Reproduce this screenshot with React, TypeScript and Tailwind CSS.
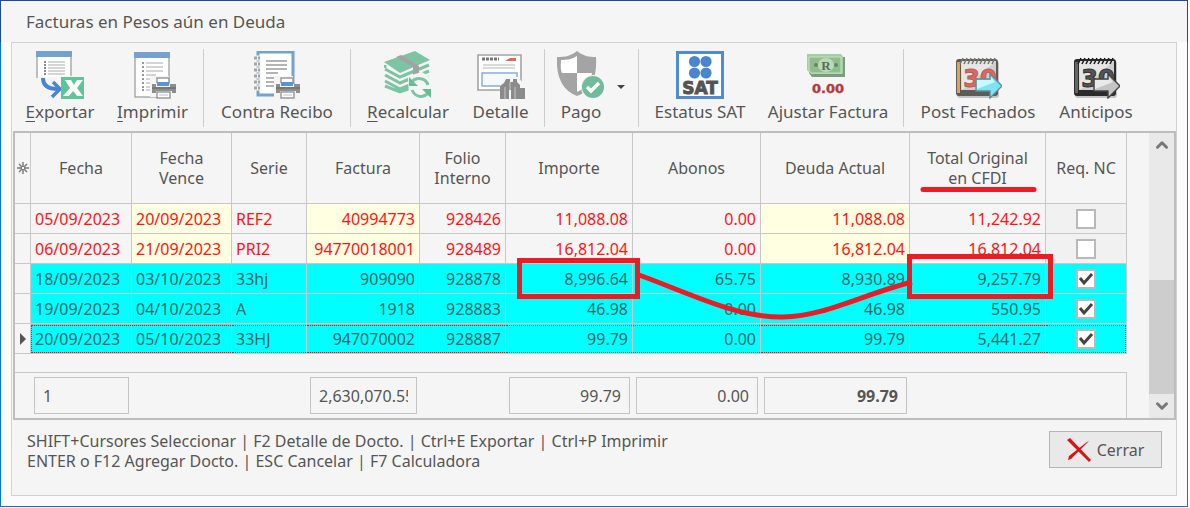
import React from 'react';
import { ChevronDown, ChevronUp } from 'lucide-react';

interface Invoice {
  fecha: string;
  vence: string;
  serie: string;
  factura: string;
  folio: string;
  importe: string;
  abonos: string;
  deuda: string;
  total: string;
  requiereNC: boolean;
}

const INVOICES: Invoice[] = [
  { fecha: '05/09/2023', vence: '20/09/2023', serie: 'REF2', factura: '40994773', folio: '928426', importe: '11,088.08', abonos: '0.00', deuda: '11,088.08', total: '11,242.92', requiereNC: false },
  { fecha: '06/09/2023', vence: '21/09/2023', serie: 'PRI2', factura: '94770018001', folio: '928489', importe: '16,812.04', abonos: '0.00', deuda: '16,812.04', total: '16,812.04', requiereNC: false },
  { fecha: '18/09/2023', vence: '03/10/2023', serie: '33hj', factura: '909090', folio: '928878', importe: '8,996.64', abonos: '65.75', deuda: '8,930.89', total: '9,257.79', requiereNC: true },
  { fecha: '19/09/2023', vence: '04/10/2023', serie: 'A', factura: '1918', folio: '928883', importe: '46.98', abonos: '0.00', deuda: '46.98', total: '550.95', requiereNC: true },
  { fecha: '20/09/2023', vence: '05/10/2023', serie: '33HJ', factura: '947070002', folio: '928887', importe: '99.79', abonos: '0.00', deuda: '99.79', total: '5,441.27', requiereNC: true },
];

type ColumnKey = Exclude<keyof Invoice, 'requiereNC'>;

const COLUMNS: { key: ColumnKey; title: string; width: string; right?: boolean; tinted?: boolean }[] = [
  { key: 'fecha', title: 'Fecha', width: 'w-[101px]' },
  { key: 'vence', title: 'Fecha Vence', width: 'w-[100px]', tinted: true },
  { key: 'serie', title: 'Serie', width: 'w-[75px]' },
  { key: 'factura', title: 'Factura', width: 'w-[113px]', right: true, tinted: true },
  { key: 'folio', title: 'Folio Interno', width: 'w-[86px]', right: true },
  { key: 'importe', title: 'Importe', width: 'w-[127px]', right: true },
  { key: 'abonos', title: 'Abonos', width: 'w-[128px]', right: true },
  { key: 'deuda', title: 'Deuda Actual', width: 'w-[149px]', right: true, tinted: true },
  { key: 'total', title: 'Total Original en CFDI', width: 'w-[136px]', right: true },
];

const SUMMARY: Partial<Record<ColumnKey, string>> = {
  fecha: '1',
  factura: '2,630,070.55',
  importe: '99.79',
  abonos: '0.00',
  deuda: '99.79',
};

const ICON = 'h-12 w-12 shrink-0';

function Printer() {
  return (
    <g>
      <path d="M21 25h19v8h8v13h-27z" fill="#f5f5f5" />
      <path d="M28 32v-5h12v5" fill="#fff" stroke="#9a9a9a" strokeWidth="1.5" />
      <path d="M23 33h4v3h14v-3h6v9h-4v-2H27v2h-4z" fill="#8e8e8e" />
      <path d="M28 31h12v4H28z" fill="#5b93d3" />
      <path d="M23 36h24v2H23z" fill="#777" />
      <path d="M28 41h13v6H28z" fill="#fff" stroke="#9a9a9a" strokeWidth="1.5" />
      <path d="M30 44h9" stroke="#a9c8ea" />
    </g>
  );
}

function ExportIcon() {
  return (
    <svg viewBox="0 0 48 48" className={ICON} aria-hidden="true">
      <path d="M1 4h34v22H1z" fill="#fff" />
      <path d="M1 5v22M35 5v20" stroke="#aaa" strokeWidth="1.5" />
      <path d="M0 0h36v6H0z" fill="#75a1cd" />
      <path d="M8 11h2M8 14h2M8 17h2M8 20h2M8 23h2" stroke="#666" strokeWidth="1.5" />
      <path d="M12 11h17M12 14h17M12 17h17M12 20h17M12 23h17" stroke="#aaa" />
      <path d="M7 27c0 7 5 11 15 11" fill="none" stroke="#4a86cc" strokeWidth="4" />
      <path d="M17 31l7 7-8 8" fill="none" stroke="#4a86cc" strokeWidth="3.5" />
      <path d="M25 26h23v22H25z" fill="#5fc49b" />
      <path d="M29 29h6l3 5 3-5h6l-6 8 6 8h-6l-4-5-4 5h-6l7-8z" fill="#fff" />
    </svg>
  );
}

function PrintIcon() {
  return (
    <svg viewBox="0 0 48 48" className={ICON} aria-hidden="true">
      <path d="M6 3h34v43H6z" fill="#fff" stroke="#aaa" strokeWidth="1.5" />
      <path d="M5 1h36v6H5z" fill="#75a1cd" />
      <path d="M13 12h2M13 16h2M13 20h2M13 24h2M13 28h2M13 32h2M13 36h2M13 39h2" stroke="#777" strokeWidth="1.5" />
      <path d="M17 12h17M17 16h17M17 20h17M17 24h10M17 28h6M17 32h4M17 36h4M17 39h5" stroke="#aaa" strokeWidth="1.2" />
      <Printer />
    </svg>
  );
}

function ReceiptIcon() {
  return (
    <svg viewBox="0 0 48 48" className={ICON} aria-hidden="true">
      <path d="M5 1h35v43H5z" fill="#fff" stroke="#75a1cd" strokeWidth="3" />
      <path d="M2 7h6M2 13h6M2 19h6M2 25h6M2 31h6M2 37h6" stroke="#f5f5f5" strokeWidth="5" />
      <path d="M1 7h6M1 13h6M1 19h6M1 25h6M1 31h6M1 37h6" stroke="#a4a4a4" strokeWidth="3" strokeDasharray="3 1" />
      <path d="M13 10h21M13 14h21M13 18h21M13 22h12M13 27h17M13 31h10M13 35h8" stroke="#9c9c9c" strokeWidth="1.3" />
      <Printer />
    </svg>
  );
}

function RecalcIcon() {
  return (
    <svg viewBox="0 0 48 48" className={ICON} aria-hidden="true">
      <path d="M0 11L31 0l15 9-30 13z" fill="#7dc4a4" />
      <path d="M1 18l15 8 29-12M1 24l15 8 29-12M1 30l15 8 29-12M1 14v3M1 35l15 6 11-4" fill="none" stroke="#7dc4a4" strokeWidth="3" />
      <path d="M12 6l5-2 18 11v10l-6 2V16z" fill="#a3a3a3" />
      <path d="M24 25l14-4 9 6v20H25z" fill="#f5f5f5" />
      <path d="M44 34c-2-7-12-9-17-2M28 39c3 7 11 9 16 3" fill="none" stroke="#7dc4a4" strokeWidth="3" />
      <path d="M25 26v9h9zM47 47v-9h-9z" fill="#68bd96" />
    </svg>
  );
}

function DetailIcon() {
  return (
    <svg viewBox="0 0 48 48" className={ICON} aria-hidden="true">
      <path d="M1 4h43v35H1z" fill="#fff" stroke="#a4a4a4" strokeWidth="1.6" />
      <path d="M5 8h17" stroke="#777" strokeWidth="3" strokeDasharray="3 1" />
      <path d="M33 7h6v3H28z" fill="#dc6a58" />
      <path d="M6 14h32M6 17h32" stroke="#b5b5b5" />
      <path d="M5 22h35v13H5z" fill="#f5f8fd" stroke="#86aedd" strokeWidth="1.5" />
      <path d="M23 33l5-7h13l7 8v15H23z" fill="#f5f5f5" />
      <path d="M29 28h4v3h3v-3h4v3l3 3v14h-9v-9h-2v9h-9V35l4-3zM43 37h5v11h-5z" fill="#8b8b8b" />
      <path d="M28 36v12M38 36v12M33 31v8" stroke="#c9c9c9" strokeWidth="1" />
    </svg>
  );
}

function ShieldIcon() {
  return (
    <svg viewBox="0 0 48 48" className={ICON} aria-hidden="true">
      <path d="M20 0c6 5 12 6 19 6 1 18-3 33-19 39C4 39-1 24 0 6c8 0 14-1 20-6z" fill="#a4a4a4" />
      <path d="M20 5v17H5C3 17 4 13 4 9c6 0 11-1 16-4zM20 22h15c-2 9-7 15-15 19z" fill="#fff" />
      <circle cx="36" cy="36" r="12" fill="#f5f5f5" />
      <circle cx="36" cy="36" r="11" fill="#6fbb9b" />
      <path d="M30 36l4 4 8-8" fill="none" stroke="#fff" strokeWidth="3.5" />
    </svg>
  );
}

function SatIcon() {
  return (
    <svg viewBox="0 0 48 48" className={ICON} aria-hidden="true">
      <path d="M1.5 1.5h45v45h-45z" fill="#fff" stroke="#4f8bd0" strokeWidth="3" />
      <g fill="#4a86cc">
        <circle cx="18.500" cy="10.500" r="5.600" />
        <circle cx="30" cy="10.500" r="5.600" />
        <circle cx="18.500" cy="22" r="5.600" />
        <circle cx="30" cy="22" r="5.600" />
      </g>
      <text x="24" y="43" textAnchor="middle" fontFamily="DejaVu Sans" fontWeight="bold" fontSize="17" fill="#555" stroke="#555">SAT</text>
    </svg>
  );
}

function MoneyIcon() {
  return (
    <svg viewBox="0 0 48 48" className={ICON} aria-hidden="true">
      <path d="M5 6h36v20H8L5 22z" fill="#7d9b7d" />
      <path d="M3 3h34l2 3v17H7l-4-4z" fill="#a3cfa0" />
      <path d="M5 6h32v16H7l-2-3z" fill="#8fbd8c" stroke="#c4e2c1" />
      <ellipse cx="22" cy="14" rx="8" ry="7" fill="#bcd9b8" />
      <circle cx="12" cy="14" r="2" fill="#5f8a61" />
      <circle cx="32" cy="14" r="2" fill="#5f8a61" />
      <text x="22" y="19" textAnchor="middle" fontFamily="Liberation Serif" fontWeight="bold" fontSize="13" fill="#52705a">R</text>
      <text x="24" y="42" textAnchor="middle" fontFamily="DejaVu Sans" fontWeight="bold" fontSize="13" fill="#b33a3a" stroke="#b33a3a" strokeWidth=".4">0.00</text>
    </svg>
  );
}

function CalendarIcon({ muted = false }: { muted?: boolean }) {
  return (
    <svg viewBox="0 0 48 48" className={ICON} aria-hidden="true">
      <rect x="3" y="10" width="42" height="37" rx="3" fill="#c4c4c4" />
      <rect x="2" y="8" width="42" height="37" rx="3" fill={muted ? '#2b2b2b' : '#5f5a56'} />
      <path d="M3 11h3v31H3z" fill={muted ? '#666' : '#e0a251'} />
      <path d="M7 10h35v29H7z" fill="#cfcfcf" />
      <path d="M7 10h35L8 39z" fill="#e6e6e6" />
      <path d="M9 7l-3 6M13 7l-3 6M17 7l-3 6M21 7l-3 6M25 7l-3 6M29 7l-3 6M33 7l-3 6M37 7l-3 6M41 7l-3 6" stroke={muted ? '#222' : '#777'} strokeWidth="1.6" />
      <text x="26" y="36" textAnchor="middle" fontFamily="DejaVu Sans" fontWeight="bold" fontSize="24" fill={muted ? '#555' : '#e0675e'} stroke={muted ? '#333' : '#b0605a'}>30</text>
      <path d="M22 28h14v-5l12 12-12 12v-7H22z" fill={muted ? '#c4c4c4' : '#7fe3f2'} stroke={muted ? '#444' : '#5b8f9a'} strokeWidth="1.4" />
      <path d="M23 29h14v-3l4 5-18 7z" fill={muted ? '#e9e9e9' : '#cbf8fc'} />
    </svg>
  );
}

interface ToolButtonProps {
  label: string;
  width: string;
  icon: React.ReactNode;
  accessKey?: boolean;
}

function ToolButton({ label, width, icon, accessKey }: ToolButtonProps) {
  return (
    <button type="button" className={`${width} flex shrink-0 flex-col items-center whitespace-nowrap pt-2 text-[17px] leading-[26px]`}>
      {icon}
      <span>
        {accessKey ? <span className="underline underline-offset-3">{label[0]}</span> : label[0]}
        {label.slice(1)}
      </span>
    </button>
  );
}

function Separator() {
  return <div className="mx-1 mt-1.5 mb-1 w-px shrink-0 bg-[#cdcdcd]" />;
}

function Toolbar() {
  return (
    <div className="flex h-22 pl-0.5" role="toolbar">
      <ToolButton label="Exportar" width="w-[92px]" icon={<ExportIcon />} accessKey />
      <ToolButton label="Imprimir" width="w-[93px]" icon={<PrintIcon />} accessKey />
      <Separator />
      <ToolButton label="Contra Recibo" width="w-[138px]" icon={<ReceiptIcon />} />
      <Separator />
      <ToolButton label="Recalcular" width="w-[106px]" icon={<RecalcIcon />} accessKey />
      <ToolButton label="Detalle" width="w-[79px]" icon={<DetailIcon />} />
      <Separator />
      <ToolButton label="Pago" width="w-[64px]" icon={<ShieldIcon />} />
      <button type="button" aria-label="Opciones de pago" className="flex w-[21px] shrink-0 items-center pl-1">
        <svg viewBox="0 0 8 4" className="h-1 w-2" aria-hidden="true"><path d="M0 0h8L4 4z" fill="#444" /></svg>
      </button>
      <Separator />
      <ToolButton label="Estatus SAT" width="w-[114px]" icon={<SatIcon />} />
      <ToolButton label="Ajustar Factura" width="w-[142px]" icon={<MoneyIcon />} />
      <Separator />
      <ToolButton label="Post Fechados" width="w-[140px]" icon={<CalendarIcon />} />
      <ToolButton label="Anticipos" width="w-[96px]" icon={<CalendarIcon muted />} />
    </div>
  );
}

function CheckBox({ checked, label }: { checked: boolean; label: string }) {
  return (
    <span className="grid place-items-center">
      <input
        type="checkbox"
        aria-label={label}
        defaultChecked={checked}
        className="peer col-start-1 row-start-1 h-5 w-5 appearance-none border-2 border-[#b9b9b9] bg-white"
      />
      <svg viewBox="0 0 20 20" className="pointer-events-none col-start-1 row-start-1 hidden h-5 w-5 peer-checked:block" aria-hidden="true">
        <path d="M4 9l4 5 8-9" fill="none" stroke="#444" strokeWidth="3" />
      </svg>
    </span>
  );
}

function InvoiceRow({ invoice, focused }: { invoice: Invoice; focused: boolean }) {
  const selected = invoice.requiereNC;
  const inner = focused ? 'border-y border-dotted border-y-[#e02020] leading-[26px]' : 'leading-7';

  return (
    <tr className={selected ? 'text-[#2c6a6a]' : 'text-[#ff1414]'}>
      <td className="h-[30px] border-r border-b border-[#c8c8c8] p-0">
        {focused ? (
          <svg viewBox="0 0 6 12" className="mx-auto h-3 w-1.5" aria-hidden="true"><path d="M0 0l6 6-6 6z" fill="#555" /></svg>
        ) : null}
      </td>
      {COLUMNS.map((column, index) => (
        <td
          key={column.key}
          className={`h-[30px] border-r border-b border-[#c8c8c8] p-0 ${column.right ? 'text-right' : 'text-left'} ${selected ? 'bg-[#00ffff]' : column.tinted ? 'bg-[#ffffe1]' : ''}`}
        >
          <div className={`h-7 pr-1 ${inner} ${focused && index === 0 ? 'border-l border-l-[#e02020] pl-[3px]' : 'pl-1'}`}>
            {invoice[column.key]}
          </div>
        </td>
      ))}
      <td className={`h-[30px] border-r border-b border-[#c8c8c8] p-0 ${selected ? 'bg-[#00ffff]' : 'bg-[#f1f1f1]'}`}>
        <div className={`flex h-7 items-center justify-center ${inner} ${focused ? 'border-r border-r-[#e02020]' : ''}`}>
          <CheckBox checked={invoice.requiereNC} label={`Req. NC ${invoice.factura}`} />
        </div>
      </td>
    </tr>
  );
}

function InvoiceTable() {
  return (
    <table className="w-full table-fixed border-separate border-spacing-0 text-base">
      <thead>
        <tr>
          <th className="h-[71px] w-4 border-r border-b border-[#c8c8c8] p-0">
            <svg viewBox="0 0 12 12" className="mx-auto h-3 w-3" aria-hidden="true">
              <path d="M6 0v12M0 6h12M2 2l8 8M10 2l-8 8" stroke="#777" strokeWidth="1.4" />
              <circle cx="6" cy="6" r="1.800" fill="#f5f5f5" stroke="#777" />
            </svg>
          </th>
          {COLUMNS.map((column) => (
            <th key={column.key} className={`${column.width} h-[71px] border-r border-b border-[#c8c8c8] px-3 py-0 text-center leading-5 font-normal`}>
              {column.title}
            </th>
          ))}
          <th className="h-[71px] w-[81px] border-r border-b border-[#c8c8c8] p-0 text-center leading-5 font-normal">Req. NC</th>
        </tr>
      </thead>
      <tbody>
        {INVOICES.map((invoice, index) => (
          <InvoiceRow key={invoice.folio} invoice={invoice} focused={index === INVOICES.length - 1} />
        ))}
      </tbody>
      <tfoot>
        <tr>
          <td colSpan={11} className="h-[18px] p-0" />
        </tr>
        <tr>
          <td className="h-[46px] border-t border-[#c8c8c8] p-0" />
          {COLUMNS.map((column) => (
            <td key={column.key} className="h-[46px] border-t border-[#c8c8c8] px-[3px] py-0">
              {SUMMARY[column.key] ? (
                <input
                  type="text"
                  readOnly
                  aria-label={`Resumen ${column.title}`}
                  value={SUMMARY[column.key]}
                  className={`block h-[37px] w-full border border-[#c4c4c4] bg-transparent px-2 ${column.right && column.key !== 'factura' ? 'text-right' : ''} ${column.key === 'deuda' ? 'font-bold' : ''}`}
                />
              ) : null}
            </td>
          ))}
          <td className="h-[46px] border-t border-r border-[#c8c8c8] p-0" />
        </tr>
      </tfoot>
    </table>
  );
}

// Red marks that relate "Importe" with "Total Original en CFDI"
function Annotations() {
  return (
    <svg viewBox="0 0 1112 285" preserveAspectRatio="none" className="pointer-events-none absolute inset-0 h-full w-full overflow-visible" aria-hidden="true">
      <g fill="none" stroke="#ed1c24" strokeWidth="5">
        <path d="M504.500 127.500h118v36h-118z" />
        <path d="M894.500 123.500h141v40h-141z" />
        <path d="M624 142C674 160 722 185 768 184C810 183 846 162 897 149" />
        <path d="M908 56.500h111" strokeLinecap="round" />
      </g>
    </svg>
  );
}

function ScrollBar() {
  return (
    <div className="flex w-[25px] shrink-0 flex-col bg-[#e9e9e9] text-[#777]">
      <button type="button" aria-label="Subir" className="flex h-6 items-center justify-center">
        <ChevronUp size={18} strokeWidth={4} />
      </button>
      <div className="flex-1" />
      <div className="h-[114px] bg-[#cdcdcd]" />
      <button type="button" aria-label="Bajar" className="flex h-6 items-center justify-center">
        <ChevronDown size={18} strokeWidth={4} />
      </button>
    </div>
  );
}

export default function App() {
  return (
    <div className="flex min-h-screen flex-col bg-white pr-0.5 pb-px font-['Noto_Sans',sans-serif] text-[#555]">
      <header className="flex h-[42px] items-center border-x border-t border-[#1d4a94] bg-[#f5f5f5] pl-[25px]">
        <h1 className="text-[17px] leading-6">Facturas en Pesos aún en Deuda</h1>
      </header>

      <main className="flex flex-1 flex-col border-x border-b border-[#0078d7] bg-[#fbfbfb] px-2.5 pb-2.5">
        <div className="flex flex-1 flex-col border border-[#d2d2d2] bg-[#f5f5f5]">
          <Toolbar />

          <div className="ml-px flex border-2 border-[#bdbdbd]">
            <div className="min-w-0 flex-1 pr-[22px]">
              <div className="relative">
                <InvoiceTable />
                <Annotations />
              </div>
            </div>
            <ScrollBar />
          </div>

          <div className="flex items-start justify-between pt-[11px] pr-3.5 pl-[15px]">
            <p className="text-base leading-5">
              SHIFT+Cursores Seleccionar | F2 Detalle de Docto. | Ctrl+E Exportar | Ctrl+P Imprimir
              <br />
              ENTER o F12 Agregar Docto. | ESC Cancelar | F7 Calculadora
            </p>
            <button type="button" className="flex h-[37px] w-[113px] items-center justify-center gap-1.5 border border-[#b5b5b5] bg-[#e9e9e9] text-base">
              <svg viewBox="0 0 24 24" className="h-6 w-6" aria-hidden="true">
                <path d="M0 2l3-2 21 22-2 2zM20 4l2-1L4 21l-3 1 1-4z" fill="#d81410" />
              </svg>
              Cerrar
            </button>
          </div>
        </div>
      </main>
    </div>
  );
}
